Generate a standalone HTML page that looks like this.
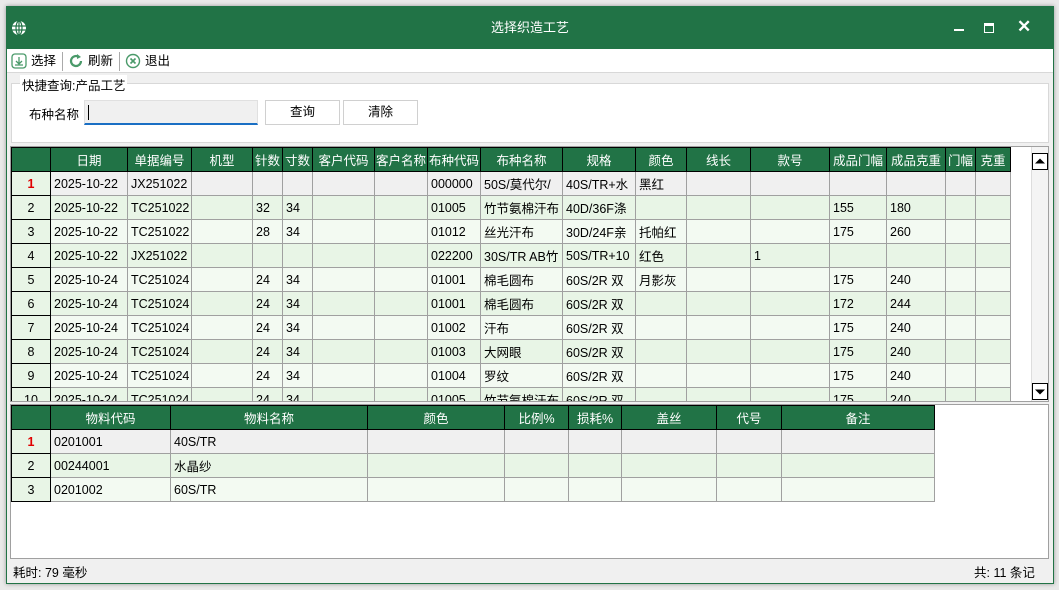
<!DOCTYPE html>
<html><head><meta charset="utf-8"><style>
*{margin:0;padding:0;box-sizing:border-box}
body{width:1059px;height:590px;background:#e9e9e9;font-family:"Liberation Sans","Noto Sans CJK SC",sans-serif;font-size:12.5px;color:#000;position:relative;overflow:hidden}
#win{position:absolute;left:6px;top:6px;width:1048px;height:578px;background:#f0f0f0;border:1px solid #217346;box-shadow:0 0 4px rgba(0,0,0,.35)}
#title{position:absolute;left:0;top:0;width:100%;height:42px;background:#217346;color:#fff}
#title .t{position:absolute;left:0;width:100%;top:10px;text-align:center;font-size:13px}
#tb{position:absolute;left:0;top:42px;width:100%;height:24px;background:#fff;border-bottom:1px solid #d8d8d8}
.tbi{position:absolute;top:1px;font-size:12.5px}
.sep{position:absolute;top:3px;width:1px;height:19px;background:#aaa}
#grp{position:absolute;left:4px;top:76px;width:1038px;height:60px;border:1px solid #d8d8d8;background:#fff}
.btn{position:absolute;top:16px;width:75px;height:25px;border:1px solid #d0d0d0;background:#fff;text-align:center;line-height:23px}
table{border-collapse:collapse;table-layout:fixed;position:absolute}
td{height:24px;border:1px solid #a0a0a0;padding:0 0 0 3px;white-space:nowrap;overflow:hidden;font-size:12.5px}
tr.h td{background:#217346;color:#fff;text-align:center;border:1px solid #000;padding:0}
td.n{background:#e8f5e6;border:1.5px solid #000;text-align:center;padding:0}
tr.s td{background:#f0f0f0}
tr.a td{background:#e8f5e6}
tr.b td{background:#f3faf2}
tr td.n{background:#e8f5e6}
.red{color:#e00000;font-weight:bold}
.arr{position:absolute;left:1021px;width:16px;height:17px;border:1px solid #000;background:#fff}
</style></head><body>
<div id="win">
<div id="title">
<svg style="position:absolute;left:4px;top:13px" width="16" height="16" viewBox="0 0 16 16"><circle cx="8" cy="8" r="7" fill="#fff"/><g stroke="#217346" stroke-width="1.2" fill="none"><ellipse cx="8" cy="8" rx="3" ry="7"/><line x1="1" y1="6" x2="15" y2="6"/><line x1="1" y1="10" x2="15" y2="10"/><line x1="8" y1="1" x2="8" y2="15"/></g></svg>
<div class="t">选择织造工艺</div>
<div style="position:absolute;left:947px;top:22px;width:10px;height:2px;background:#fff"></div>
<div style="position:absolute;left:977px;top:16px;width:10px;height:10px;border:1.5px solid #fff;border-top-width:3px"></div>
<div style="position:absolute;left:1010px;top:10px;color:#fff;font-size:17px;font-weight:bold">✕</div>
</div>
<div id="tb">
<svg style="position:absolute;left:4px;top:4px" width="16" height="16" viewBox="0 0 16 16"><rect x="1" y="1" width="14" height="14" rx="3" fill="none" stroke="#4a9a6a" stroke-width="1.3"/><path d="M8 4v7M5 8l3 3 3-3M4 12h8" stroke="#4a9a6a" stroke-width="1.3" fill="none"/></svg>
<div class="tbi" style="left:24px">选择</div><div class="sep" style="left:55px"></div>
<svg style="position:absolute;left:61px;top:4px" width="16" height="16" viewBox="0 0 16 16"><path d="M13 8a5 5 0 1 1-2-4" stroke="#4a9a6a" stroke-width="2.2" fill="none"/><path d="M9 1l4 3-4 2z" fill="#4a9a6a"/></svg>
<div class="tbi" style="left:81px">刷新</div><div class="sep" style="left:112px"></div>
<svg style="position:absolute;left:118px;top:4px" width="16" height="16" viewBox="0 0 16 16"><circle cx="8" cy="8" r="6.5" fill="none" stroke="#4a9a6a" stroke-width="1.4"/><path d="M5.5 5.5l5 5M10.5 5.5l-5 5" stroke="#4a9a6a" stroke-width="1.6"/></svg>
<div class="tbi" style="left:138px">退出</div>
</div>
<div id="grp">
<div style="position:absolute;left:8px;top:-9px;background:#fff;padding:0 2px">快捷查询:产品工艺</div>
<div style="position:absolute;left:17px;top:20px">布种名称</div>
<div style="position:absolute;left:72px;top:16px;width:174px;height:25px;background:#f0f0f0;border:1px solid #e0e0e0;border-bottom:2px solid #1a6fc4"><div style="position:absolute;left:3px;top:4px;width:1px;height:15px;background:#000"></div></div>
<div class="btn" style="left:253px">查询</div>
<div class="btn" style="left:331px">清除</div>
</div>
<div style="position:absolute;left:3px;top:139px;width:1039px;height:256px;background:#fff;border:1px solid #a0a0a0;overflow:hidden">
<table style="left:0;top:0;width:999px">
<colgroup><col style="width:39px"><col style="width:77px"><col style="width:64px"><col style="width:61px"><col style="width:30px"><col style="width:30px"><col style="width:62px"><col style="width:53px"><col style="width:53px"><col style="width:82px"><col style="width:73px"><col style="width:51px"><col style="width:64px"><col style="width:79px"><col style="width:57px"><col style="width:59px"><col style="width:30px"><col style="width:35px"></colgroup>
<tr class="h"><td></td><td>日期</td><td>单据编号</td><td>机型</td><td>针数</td><td>寸数</td><td>客户代码</td><td>客户名称</td><td>布种代码</td><td>布种名称</td><td>规格</td><td>颜色</td><td>线长</td><td>款号</td><td>成品门幅</td><td>成品克重</td><td>门幅</td><td>克重</td></tr>
<tr class="s"><td class="n red">1</td><td>2025-10-22</td><td>JX251022</td><td></td><td></td><td></td><td></td><td></td><td>000000</td><td>50S/莫代尔/</td><td>40S/TR+水</td><td>黑红</td><td></td><td></td><td></td><td></td><td></td><td></td></tr>
<tr class="a"><td class="n">2</td><td>2025-10-22</td><td>TC251022</td><td></td><td>32</td><td>34</td><td></td><td></td><td>01005</td><td>竹节氨棉汗布</td><td>40D/36F涤</td><td></td><td></td><td></td><td>155</td><td>180</td><td></td><td></td></tr>
<tr class="b"><td class="n">3</td><td>2025-10-22</td><td>TC251022</td><td></td><td>28</td><td>34</td><td></td><td></td><td>01012</td><td>丝光汗布</td><td>30D/24F亲</td><td>托帕红</td><td></td><td></td><td>175</td><td>260</td><td></td><td></td></tr>
<tr class="a"><td class="n">4</td><td>2025-10-22</td><td>JX251022</td><td></td><td></td><td></td><td></td><td></td><td>022200</td><td>30S/TR AB竹</td><td>50S/TR+10</td><td>红色</td><td></td><td>1</td><td></td><td></td><td></td><td></td></tr>
<tr class="b"><td class="n">5</td><td>2025-10-24</td><td>TC251024</td><td></td><td>24</td><td>34</td><td></td><td></td><td>01001</td><td>棉毛圆布</td><td>60S/2R 双</td><td>月影灰</td><td></td><td></td><td>175</td><td>240</td><td></td><td></td></tr>
<tr class="a"><td class="n">6</td><td>2025-10-24</td><td>TC251024</td><td></td><td>24</td><td>34</td><td></td><td></td><td>01001</td><td>棉毛圆布</td><td>60S/2R 双</td><td></td><td></td><td></td><td>172</td><td>244</td><td></td><td></td></tr>
<tr class="b"><td class="n">7</td><td>2025-10-24</td><td>TC251024</td><td></td><td>24</td><td>34</td><td></td><td></td><td>01002</td><td>汗布</td><td>60S/2R 双</td><td></td><td></td><td></td><td>175</td><td>240</td><td></td><td></td></tr>
<tr class="a"><td class="n">8</td><td>2025-10-24</td><td>TC251024</td><td></td><td>24</td><td>34</td><td></td><td></td><td>01003</td><td>大网眼</td><td>60S/2R 双</td><td></td><td></td><td></td><td>175</td><td>240</td><td></td><td></td></tr>
<tr class="b"><td class="n">9</td><td>2025-10-24</td><td>TC251024</td><td></td><td>24</td><td>34</td><td></td><td></td><td>01004</td><td>罗纹</td><td>60S/2R 双</td><td></td><td></td><td></td><td>175</td><td>240</td><td></td><td></td></tr>
<tr class="a"><td class="n">10</td><td>2025-10-24</td><td>TC251024</td><td></td><td>24</td><td>34</td><td></td><td></td><td>01005</td><td>竹节氨棉汗布</td><td>60S/2R 双</td><td></td><td></td><td></td><td>175</td><td>240</td><td></td><td></td></tr>
</table>
<div style="position:absolute;left:1020px;top:0;width:18px;height:256px;background:#f4f4f4;border-left:1px solid #ddd"></div>
<div class="arr" style="top:6px"><svg width="14" height="15" viewBox="0 0 14 15" style="display:block"><path d="M2 9.5h10L7 4.5z" fill="#000"/></svg></div>
<div class="arr" style="top:236px"><svg width="14" height="15" viewBox="0 0 14 15" style="display:block"><path d="M2 5.5h10L7 10.5z" fill="#000"/></svg></div>
</div>
<div style="position:absolute;left:3px;top:397px;width:1039px;height:155px;background:#fff;border:1px solid #a0a0a0;overflow:hidden">
<table style="left:0;top:0;width:923px">
<colgroup><col style="width:39px"><col style="width:120px"><col style="width:197px"><col style="width:137px"><col style="width:64px"><col style="width:53px"><col style="width:95px"><col style="width:65px"><col style="width:153px"></colgroup>
<tr class="h"><td></td><td>物料代码</td><td>物料名称</td><td>颜色</td><td>比例%</td><td>损耗%</td><td>盖丝</td><td>代号</td><td>备注</td></tr>
<tr class="s"><td class="n red">1</td><td>0201001</td><td>40S/TR</td><td></td><td></td><td></td><td></td><td></td><td></td></tr>
<tr class="a"><td class="n">2</td><td>00244001</td><td>水晶纱</td><td></td><td></td><td></td><td></td><td></td><td></td></tr>
<tr class="b"><td class="n">3</td><td>0201002</td><td>60S/TR</td><td></td><td></td><td></td><td></td><td></td><td></td></tr>
</table>
</div>
<div style="position:absolute;left:6px;top:555px">耗时: 79 毫秒</div>
<div style="position:absolute;left:967px;top:555px">共: 11 条记</div>
</div>
</body></html>
